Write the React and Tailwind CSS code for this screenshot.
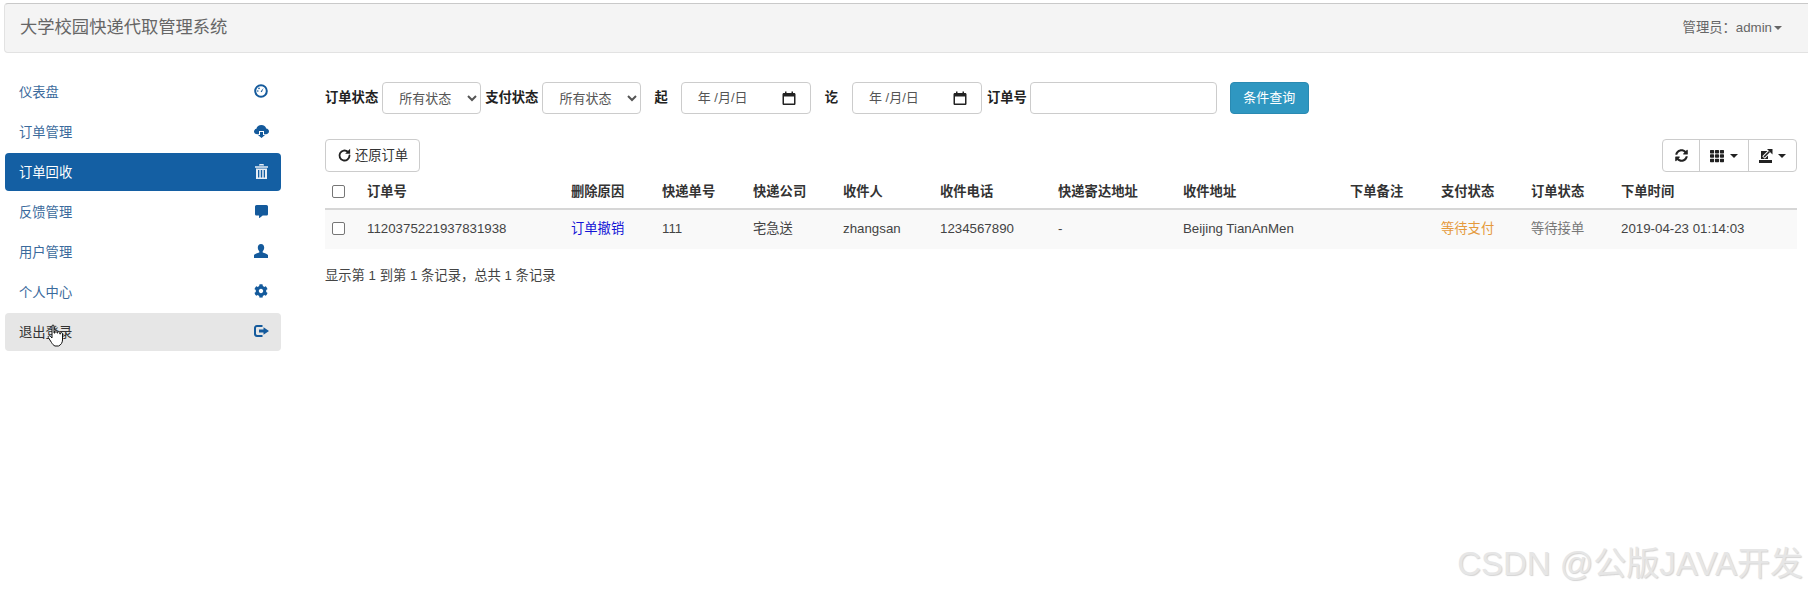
import React from "react";
import { FaCommentAlt, FaCog, FaTh, FaSyncAlt } from "react-icons/fa";

const DashboardIcon = () => (
  <svg width="14" height="14" viewBox="0 0 14 14">
    <circle cx="7" cy="7" r="5.8" fill="none" stroke="currentColor" strokeWidth="2" />
    <path d="M6.600 7.400 9.600 3.900 7.800 8.200Z" fill="currentColor" />
    <circle cx="3.800" cy="7" r="0.800" fill="currentColor" />
    <circle cx="5" cy="4.400" r="0.800" fill="currentColor" />
  </svg>
);

const CloudIcon = () => (
  <svg width="15" height="14" viewBox="0 0 15 14" fill="currentColor">
    <path d="M3.400 10.200C1.400 10.200 0 9 0 7.400 0 6 1 5 2.400 4.800 2.800 2.600 4.800 1 7.400 1c2.500 0 4.300 1.400 4.800 3.400 1.600.1 2.800 1.300 2.800 2.900 0 1.700-1.300 2.900-3 2.900H10V7H5v3.200Z" />
    <path d="M6 8h3v3h2l-3.500 3L4 11h2Z" />
  </svg>
);

const TrashIcon = () => (
  <svg width="13" height="15" viewBox="0 0 13 15" fill="currentColor">
    <path d="M0 2.200h13v1.600H0ZM4.500 0h4l.6 1.600H3.900Z" />
    <path d="M1 4.500h11V15H1Zm2 1.500v7.500h1.300V6Zm2.800 0v7.500h1.400V6Zm2.900 0v7.500H10V6Z" fillRule="evenodd" />
  </svg>
);

const UserIcon = () => (
  <svg width="14" height="14" viewBox="0 0 14 14" fill="currentColor">
    <path d="M7 0c2 0 3.200 1.500 3.200 3.600 0 1.700-.7 3-1.500 3.700v1.200c1.900.6 4.300 1.300 5.300 2.500V14H0v-3c1-1.200 3.400-1.900 5.300-2.500V7.300C4.500 6.600 3.800 5.300 3.800 3.600 3.800 1.500 5 0 7 0Z" />
  </svg>
);

const LogoutIcon = () => (
  <svg width="15" height="14" viewBox="0 0 15 14" fill="currentColor">
    <path d="M3 1h5.500v2H3.200C2.500 3 2 3.500 2 4.200v5.600c0 .7.500 1.200 1.200 1.200h5.300v2H3c-1.700 0-3-1.300-3-3V4c0-1.700 1.300-3 3-3Z" />
    <path d="M9.500 3.200 15 7l-5.500 3.800V8.500H5v-3h4.500Z" />
  </svg>
);

const CalendarIcon = () => (
  <svg width="14" height="14" viewBox="0 0 14 14" fill="#222">
    <path d="M3 0.500h1.500V2h5V0.500H11V2h1.200c.7 0 1.300.6 1.300 1.300v9.400c0 .7-.6 1.300-1.300 1.300H1.800C1.100 14 .5 13.400 .5 12.700V3.300C.5 2.600 1.100 2 1.800 2H3Zm-1 5v7h10V5.500Z" fillRule="evenodd" />
  </svg>
);

const ExportIcon = () => (
  <svg width="14" height="14" viewBox="0 0 14 14">
    <path d="M0 11h13v3H0Z" fill="#222" />
    <path d="M2 2h7v8H2Z" fill="#222" />
    <path d="M4.500 8.500 10 3" stroke="#fff" strokeWidth="3.500" />
    <path d="M5 8 10.500 2.500" stroke="#222" strokeWidth="1.600" />
    <path d="M8 0h5.500v5.500Z" fill="#222" />
  </svg>
);

const RestoreIcon = () => (
  <svg width="15" height="15" viewBox="0 0 24 24" fill="none" stroke="#222" strokeWidth="3" strokeLinecap="round">
    <path d="M20 12a8 8 0 1 1-2.600-5.900" />
    <path d="M21 1v8h-8Z" fill="#222" stroke="none" />
  </svg>
);

const HandCursor = () => (
  <svg width="18" height="24" viewBox="0 0 18 24" className="absolute left-[42px] top-[11px]">
    <path
      d="M5 2c0-1.300 2-1.300 2 0v7l1 0V7.500c0-1.200 2-1.200 2 0V9h.8V8.300c0-1.200 2-1.200 2 0V10h.7V9.500c0-1.200 2-1.200 2 .2v6.300c0 2.500-1.500 5-4 6H8c-1.500-.6-2.500-1.800-3.500-3.500L1.300 13.500c-.7-1.300 1-2.300 2-1.200L5 14Z"
      fill="#fff"
      stroke="#111"
      strokeWidth="1"
      strokeLinejoin="round"
    />
  </svg>
);

const menu = [
  { name: "仪表盘", icon: <DashboardIcon /> },
  { name: "订单管理", icon: <CloudIcon /> },
  { name: "订单回收", icon: <TrashIcon />, active: true },
  { name: "反馈管理", icon: <FaCommentAlt size={13} /> },
  { name: "用户管理", icon: <UserIcon /> },
  { name: "个人中心", icon: <FaCog size={14} /> },
  { name: "退出登录", icon: <LogoutIcon />, hover: true },
];

const columns = [
  { title: "订单号", width: "w-[204px]" },
  { title: "删除原因", width: "w-[91px]" },
  { title: "快递单号", width: "w-[91px]" },
  { title: "快递公司", width: "w-[90px]" },
  { title: "收件人", width: "w-[97px]" },
  { title: "收件电话", width: "w-[118px]" },
  { title: "快递寄达地址", width: "w-[125px]" },
  { title: "收件地址", width: "w-[167px]" },
  { title: "下单备注", width: "w-[91px]" },
  { title: "支付状态", width: "w-[90px]" },
  { title: "订单状态", width: "w-[90px]" },
  { title: "下单时间", width: "w-[184px]" },
];

const Caret = () => (
  <span className="inline-block w-0 h-0 border-x-[4px] border-x-transparent border-t-[4px] border-t-current" />
);

const Label = ({ children, className = "" }) => (
  <span className={`text-[13.300px] font-bold text-[#222] ${className}`}>{children}</span>
);

const StatusSelect = () => (
  <select className="w-[99px] h-[32px] pl-3 bg-white border border-[#ccc] rounded text-[13px] text-[#555]">
    <option>所有状态</option>
  </select>
);

const DateBox = () => (
  <div className="w-[130px] h-[32px] pl-4 pr-[14px] border border-[#ccc] rounded flex items-center justify-between text-[13px] text-[#555]">
    <span>年 /月/日</span>
    <CalendarIcon />
  </div>
);

const Checkbox = () => (
  <span className="block w-[13px] h-[13px] border border-[#767676] rounded-[2px] bg-white" />
);

export default function App() {
  return (
    <div
      className="relative min-h-[597px] bg-white overflow-hidden text-[#333] text-[13.300px]"
      style={{ fontFamily: '"Liberation Sans", "Noto Sans CJK SC", sans-serif' }}
    >
      {/* Top navbar */}
      <div className="pt-[3px] pl-[4px]">
        <div className="h-[50px] flex items-center justify-between pl-[15px] pr-[26px] bg-[#f4f4f4] border border-r-0 border-[#e2e2e2] border-t-[#c9c9c9] rounded-l">
          <span className="text-[17.300px] text-[#666]">大学校园快递代取管理系统</span>
          <span className="flex items-center gap-[2px] text-[13.300px] text-[#666]">
            管理员：admin
            <Caret />
          </span>
        </div>
      </div>

      <div className="flex pt-[20px] pl-[5px]">
        {/* Sidebar */}
        <nav className="w-[276px] shrink-0 flex flex-col gap-[2px]">
          {menu.map((item) => (
            <a
              key={item.name}
              className={`relative h-[38px] flex items-center justify-between pl-[14px] pr-[12px] rounded text-[13.300px] ${
                item.active
                  ? "bg-[#145fa3] text-white"
                  : item.hover
                  ? "bg-[#e6e6e6] text-[#1b5390]"
                  : "text-[#3a6a9c]"
              }`}
            >
              <span className={`pt-[2px] ${item.hover ? "text-[#333]" : ""}`}>{item.name}</span>
              <span className={`w-[16px] flex justify-center -mt-[2px] ${item.active ? "text-[#e8eef5]" : "text-[#145a9c]"}`}>
                {item.icon}
              </span>
              {item.hover && <HandCursor />}
            </a>
          ))}
        </nav>

        {/* Main */}
        <main className="ml-[44px] w-[1472px]">
          <div className="flex items-center pt-[9px]">
            <Label>订单状态</Label>
            <div className="ml-[4px]"><StatusSelect /></div>
            <Label className="ml-[4px]">支付状态</Label>
            <div className="ml-[4px]"><StatusSelect /></div>
            <Label className="ml-[13px]">起</Label>
            <div className="ml-[13px]"><DateBox /></div>
            <Label className="ml-[14px]">讫</Label>
            <div className="ml-[14px]"><DateBox /></div>
            <Label className="ml-[5px]">订单号</Label>
            <div className="ml-[3px] w-[187px] h-[32px] border border-[#ccc] rounded bg-white" />
            <button className="ml-[13px] w-[79px] h-[32px] rounded bg-[#2f97c1] border border-[#2a8ab2] text-white text-[13px]">
              条件查询
            </button>
          </div>

          <div className="flex items-center justify-between mt-[25px]">
            <button className="w-[95px] h-[33px] flex items-center justify-center gap-[3px] border border-[#ccc] rounded bg-white text-[13.300px] text-[#333]">
              <RestoreIcon />
              还原订单
            </button>
            <div className="flex w-[135px] h-[33px] border border-[#ccc] rounded bg-white text-[#222]">
              <button className="w-[37px] flex items-center justify-center border-r border-[#ccc]">
                <FaSyncAlt size={13} />
              </button>
              <button className="w-[49px] flex items-center justify-center gap-[6px] border-r border-[#ccc]">
                <FaTh size={14} />
                <Caret />
              </button>
              <button className="w-[47px] flex items-center justify-center gap-[5px]">
                <ExportIcon />
                <Caret />
              </button>
            </div>
          </div>

          <table className="table-fixed w-[1472px] mt-[3px] border-collapse">
            <thead>
              <tr className="h-[34px] border-b-[2px] border-[#d6d6d6]">
                <th className="w-[34px] pl-[7px]"><Checkbox /></th>
                {columns.map((col) => (
                  <th key={col.title} className={`${col.width} px-2 text-left text-[13.300px] font-bold text-[#333]`}>
                    {col.title}
                  </th>
                ))}
              </tr>
            </thead>
            <tbody>
              <tr className="h-[40px] bg-[#f9f9f9] text-[#444] [&>td]:pb-[2px]">
                <td className="pl-[7px]"><Checkbox /></td>
                <td className="px-2">1120375221937831938</td>
                <td className="px-2 text-[#1414d6]">订单撤销</td>
                <td className="px-2">111</td>
                <td className="px-2">宅急送</td>
                <td className="px-2">zhangsan</td>
                <td className="px-2">1234567890</td>
                <td className="px-2">-</td>
                <td className="px-2">Beijing TianAnMen</td>
                <td className="px-2"></td>
                <td className="px-2 text-[#e59a3c]">等待支付</td>
                <td className="px-2 text-[#777]">等待接单</td>
                <td className="px-2">2019-04-23 01:14:03</td>
              </tr>
            </tbody>
          </table>

          <p className="mt-[18px] text-[13.300px] leading-[18px] text-[#444]">显示第 1 到第 1 条记录，总共 1 条记录</p>
        </main>
      </div>

      {/* Watermark */}
      <div className="absolute right-[5px] bottom-[13px] text-[33px] leading-[40px] text-[#e6e6e6] [text-shadow:1px_1px_1px_#d4d4d4]">
        CSDN @公版JAVA开发
      </div>
    </div>
  );
}
